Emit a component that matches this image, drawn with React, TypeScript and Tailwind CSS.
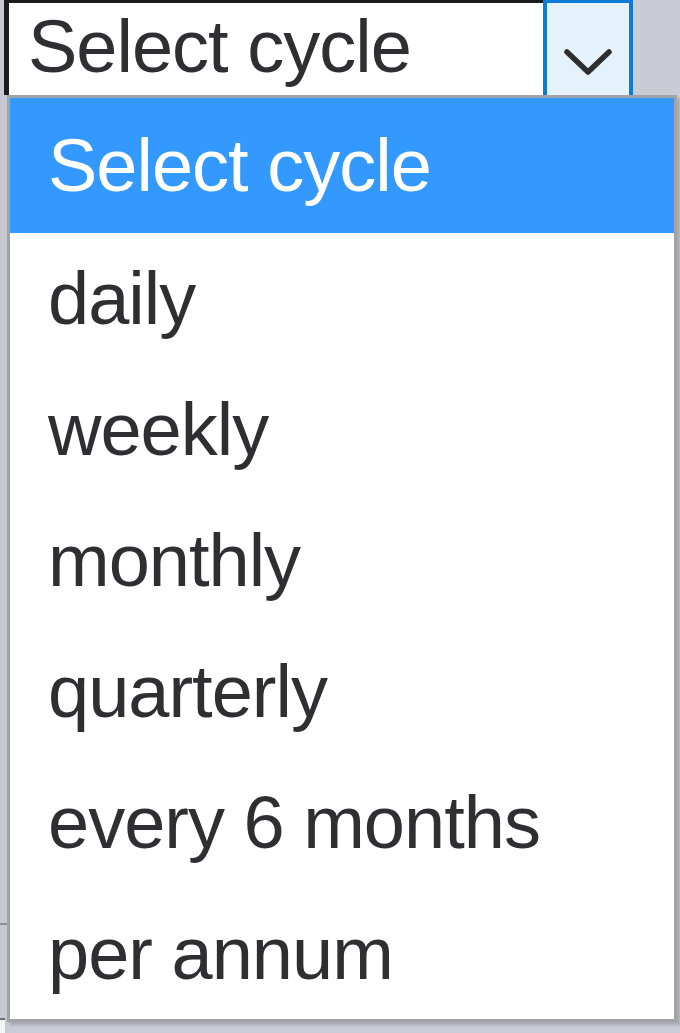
const options = ["daily", "weekly", "monthly", "quarterly", "every 6 months", "per annum"];

export default function App() {
  return (
    <div
      className="flex h-[1033px] w-[680px] flex-col overflow-hidden bg-[#cacdd5] text-[74px] tracking-[-1px] text-[#2f2f33]"
      style={{ fontFamily: '"Liberation Sans", Arial, sans-serif' }}
    >
      {/* closed select */}
      <div className="flex h-[95px] shrink-0">
        <div className="w-[4px] bg-[#c6c9d1]" />
        <div className="flex flex-1 border-l-[5px] border-t-[3px] border-[#1c1c1c] bg-white">
          <div className="flex-1 pl-[19px] leading-[87px] whitespace-nowrap">Select cycle</div>
        </div>
        <div className="flex w-[90px] justify-center border-x-[4px] border-t-[3px] border-[#0a7bd6] bg-[#e5f1fb] pt-[45px]">
          <svg width="48" height="28" viewBox="0 0 48 28" fill="none">
            <polyline
              points="3,4 24,24 45,4"
              stroke="#2e2e2e"
              strokeWidth="5.5"
              strokeLinecap="round"
              strokeLinejoin="round"
            />
          </svg>
        </div>
        <div className="w-[47px] bg-[#c9ccd5]" />
      </div>

      {/* open list */}
      <div className="flex flex-1">
        <div className="flex w-[7px] flex-col bg-[#c6c9d1]">
          <div className="mt-[828px] h-[95px] border-t-[2px] border-[#8e9096] bg-[#c6c9d1]" />
          <div className="h-[90px] w-[5px] border-t-[2px] border-[#6e7076] bg-[#f4f4f4]" />
        </div>
        <div className="flex flex-col">
          <div className="w-[670px] border-[3px] border-[#a2a3a7] bg-white shadow-[3px_3px_3px_rgba(0,0,0,0.18)]">
            <div className="h-[135px] bg-[#3399ff] pl-[38px] leading-[131px] text-white whitespace-nowrap">
              <div className="pt-[2px]">Select cycle</div>
            </div>
            {options.map((o) => (
              <div key={o} className="h-[131px] pl-[38px] leading-[131px] whitespace-nowrap">
                {o}
              </div>
            ))}
          </div>
        </div>
      </div>
    </div>
  );
}
